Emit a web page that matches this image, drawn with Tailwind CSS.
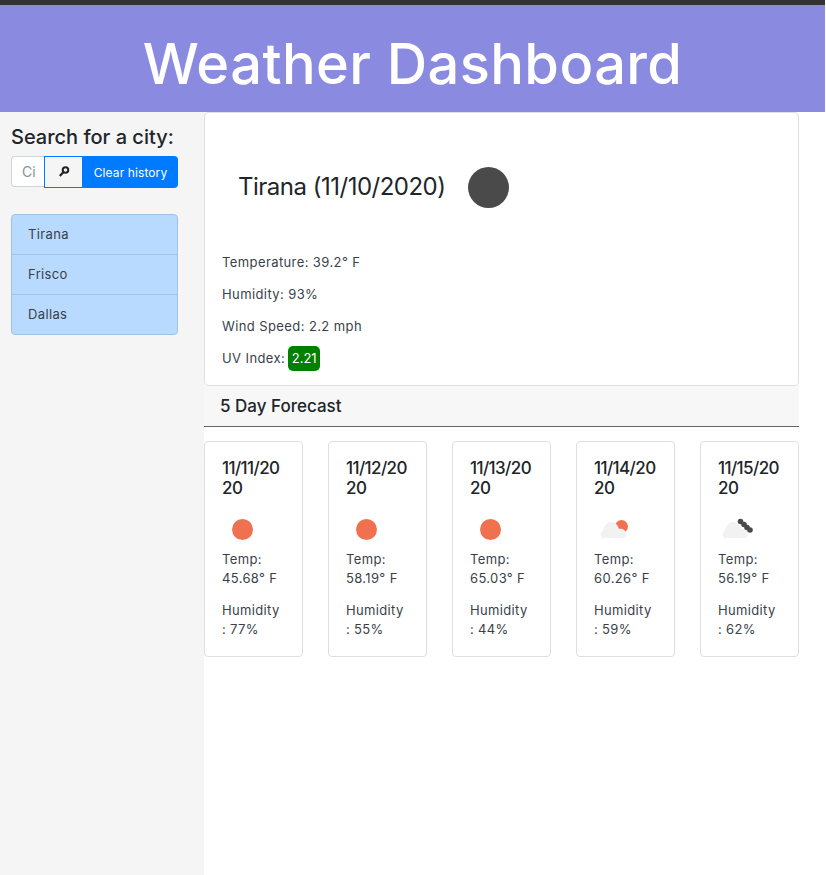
<!DOCTYPE html>
<html lang="en">
<head>
    <meta charset="UTF-8">
    <meta name="viewport" content="width=device-width, initial-scale=1.0">
    <title>Weather Dashboard</title>
    <script src="https://cdn.jsdelivr.net/npm/@tailwindcss/browser@4"></script>
</head>
<body class="bg-white font-['Inter',sans-serif] text-[#212529]">

<div class="w-[825px] h-[875px] overflow-hidden flex flex-col">

    <!-- Top strip -->
    <div class="h-[5px] bg-[#333333]"></div>

    <!-- Header -->
    <header class="h-[107px] pt-[10px] bg-[#8a8ae0] flex items-center justify-center">
        <h1 class="text-[56px] leading-none font-medium text-white tracking-[0.4px]">Weather Dashboard</h1>
    </header>

    <div class="flex flex-1">

        <!-- Sidebar -->
        <aside class="w-[204px] bg-[#f5f5f5] pl-[11px] pr-[26px]">
            <h2 class="text-[20px] leading-6 mt-[13px] font-medium whitespace-nowrap">Search for a city:</h2>
            <div class="flex mt-[7px] h-8 w-[167px]">
                <div class="w-[33px] h-[31px] bg-white border border-[#ced4da] border-r-0 rounded-l-[4px] pl-[10px] text-sm leading-[29px] text-[#8a9099] overflow-hidden">Ci</div>
                <button class="w-[39px] h-8 bg-[#f5f5f5] border border-[#007bff] flex items-center justify-center">
                    <svg width="14" height="14" viewBox="0 0 14 14" fill="none">
                        <circle cx="8.5" cy="5" r="2.8" stroke="#222222" stroke-width="2"/>
                        <path d="M6.3 7.2 L2.8 11" stroke="#222222" stroke-width="2.2"/>
                    </svg>
                </button>
                <button class="flex-1 h-8 pt-[1px] bg-[#007bff] text-white text-xs rounded-r-[4px] whitespace-nowrap tracking-[0.1px]">Clear history</button>
            </div>
            <ul class="mt-[26px] w-[167px] bg-[#b8daff] border border-[#9fc3e6] rounded-[4px] text-[13px] tracking-[0.35px] text-[#3a3f4a]">
                <li class="h-10 pl-4 leading-[39px] border-b border-[#9fc3e6]">Tirana</li>
                <li class="h-10 pl-4 leading-[39px] border-b border-[#9fc3e6]">Frisco</li>
                <li class="h-[39px] pl-4 leading-[39px]">Dallas</li>
            </ul>
        </aside>

        <!-- Main -->
        <main class="w-[595px]">

            <!-- Current weather -->
            <section class="h-[274px] border border-[#dfdfdf] rounded-[4px] pl-[17px] text-[13px] tracking-[0.4px] text-[#3a3f4a]">
                <div class="flex items-center h-[120px] pt-[22px] pl-4">
                    <h2 class="text-[24px] mt-[6px] font-normal tracking-[-0.5px] text-[#212529] whitespace-nowrap">Tirana (11/10/2020)</h2>
                    <div class="w-[41px] h-[41px] rounded-full bg-[#4a4a4a] ml-[22px] mt-[6px]"></div>
                </div>
                <p class="h-8 mt-[13px] leading-8">Temperature: 39.2° F</p>
                <p class="h-8 leading-8">Humidity: 93%</p>
                <p class="h-8 leading-8">Wind Speed: 2.2 mph</p>
                <p class="h-8 leading-[34px] flex items-center">UV Index:<span class="ml-[3px] mt-[1px] w-8 h-[25px] rounded-[5px] bg-[#008000] text-white text-center leading-[25px] tracking-normal">2.21</span></p>
            </section>

            <!-- Forecast heading -->
            <div class="h-[41px] bg-[#f7f7f7] border-b border-[#5f6673] pl-4 text-[17px] font-medium leading-[40px] text-[#212529]">5 Day Forecast</div>

            <!-- Forecast cards -->
            <div class="flex justify-between mt-[14px]">
                <article class="w-[99px] h-[216px] border border-[#dfdfdf] rounded-[4px] pl-[17px] pr-2 pt-4 text-[13px] tracking-[0.35px] leading-[19px] text-[#3a3f4a]">
                    <h3 class="w-[64px] text-[17px] leading-5 font-medium tracking-[-0.6px] text-[#212529] break-all">11/11/2020</h3>
                    <div class="h-[42px] mt-[10px] pl-[10px] flex items-center">
                        <div class="w-[21px] h-[21px] rounded-full bg-[#ef7150]"></div>
                    </div>
                    <p>Temp:<br>45.68° F</p>
                    <p class="mt-[13px]">Humidity<br>: 77%</p>
                </article>
                <article class="w-[99px] h-[216px] border border-[#dfdfdf] rounded-[4px] pl-[17px] pr-2 pt-4 text-[13px] tracking-[0.35px] leading-[19px] text-[#3a3f4a]">
                    <h3 class="w-[64px] text-[17px] leading-5 font-medium tracking-[-0.6px] text-[#212529] break-all">11/12/2020</h3>
                    <div class="h-[42px] mt-[10px] pl-[10px] flex items-center">
                        <div class="w-[21px] h-[21px] rounded-full bg-[#ef7150]"></div>
                    </div>
                    <p>Temp:<br>58.19° F</p>
                    <p class="mt-[13px]">Humidity<br>: 55%</p>
                </article>
                <article class="w-[99px] h-[216px] border border-[#dfdfdf] rounded-[4px] pl-[17px] pr-2 pt-4 text-[13px] tracking-[0.35px] leading-[19px] text-[#3a3f4a]">
                    <h3 class="w-[64px] text-[17px] leading-5 font-medium tracking-[-0.6px] text-[#212529] break-all">11/13/2020</h3>
                    <div class="h-[42px] mt-[10px] pl-[10px] flex items-center">
                        <div class="w-[21px] h-[21px] rounded-full bg-[#ef7150]"></div>
                    </div>
                    <p>Temp:<br>65.03° F</p>
                    <p class="mt-[13px]">Humidity<br>: 44%</p>
                </article>
                <article class="w-[99px] h-[216px] border border-[#dfdfdf] rounded-[4px] pl-[17px] pr-2 pt-4 text-[13px] tracking-[0.35px] leading-[19px] text-[#3a3f4a]">
                    <h3 class="w-[64px] text-[17px] leading-5 font-medium tracking-[-0.6px] text-[#212529] break-all">11/14/2020</h3>
                    <div class="h-[42px] mt-[10px] flex items-center">
                        <svg width="36" height="24" viewBox="0 0 36 24">
                            <circle cx="27.5" cy="9.5" r="6.5" fill="#ef7150"/>
                            <path d="M11 21 A3.5 3.5 0 0 1 8.5 14.5 C9.5 10 12.5 5 17 5 C21 5 24 8 25 12 C29 11 32 14 32 17 C32 19.5 30 21 28 21 Z" fill="#f2f2f2"/>
                        </svg>
                    </div>
                    <p>Temp:<br>60.26° F</p>
                    <p class="mt-[13px]">Humidity<br>: 59%</p>
                </article>
                <article class="w-[99px] h-[216px] border border-[#dfdfdf] rounded-[4px] pl-[17px] pr-2 pt-4 text-[13px] tracking-[0.35px] leading-[19px] text-[#3a3f4a]">
                    <h3 class="w-[64px] text-[17px] leading-5 font-medium tracking-[-0.6px] text-[#212529] break-all">11/15/2020</h3>
                    <div class="h-[42px] mt-[10px] flex items-center">
                        <svg width="36" height="24" viewBox="0 0 36 24">
                            <path d="M9 21 A3.5 3.5 0 0 1 6.5 14.5 C7.5 10 10.5 5 15 5 C19 5 22 8 23 12 C27 11 30 14 30 17 C30 19.5 28 21 26 21 Z" fill="#f2f2f2"/>
                            <g fill="#4a4a4a">
                                <circle cx="22.5" cy="4.5" r="2.8"/>
                                <circle cx="26" cy="7.5" r="2.8"/>
                                <circle cx="29" cy="10.5" r="2.8"/>
                                <circle cx="32" cy="13" r="2.8"/>
                            </g>
                        </svg>
                    </div>
                    <p>Temp:<br>56.19° F</p>
                    <p class="mt-[13px]">Humidity<br>: 62%</p>
                </article>
            </div>

        </main>
    </div>
</div>

</body>
</html>
